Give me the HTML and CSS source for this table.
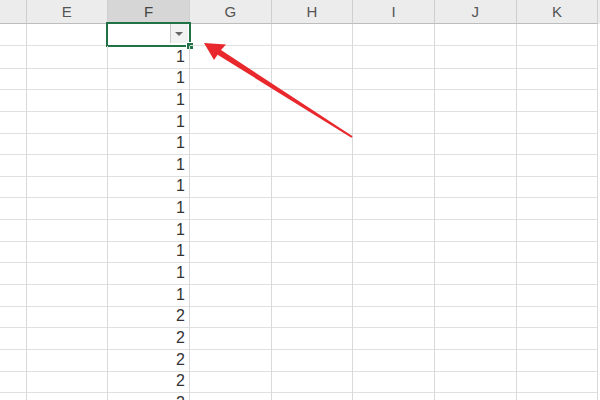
FILE: index.html
```html
<!DOCTYPE html>
<html>
<head>
  <title>Sheet</title>
  <meta name="viewport" content="width=device-width, initial-scale=1.0">
  <link rel="stylesheet" href="styles.css">
</head>
<body>
  <div class="sheet">
    <div class="row head">
      <div class="hcell"></div>
      <div class="hcell">E</div>
      <div class="hcell sel">F</div>
      <div class="hcell">G</div>
      <div class="hcell">H</div>
      <div class="hcell">I</div>
      <div class="hcell">J</div>
      <div class="hcell">K</div>
    </div>
    <div id="rows"></div>
  </div>

  <svg class="arrow" width="600" height="400" viewBox="0 0 600 400">
    <polygon points="204,43 226,44.5 221,50 352.6,136.3 351.4,137.8 217.6,54.8 214,60" fill="#e8282c"/>
  </svg>

  <script>
    // column F values, first row is the active cell with the dropdown
    const values = ['', 1, 1, 1, 1, 1, 1, 1, 1, 1, 1, 1, 1, 2, 2, 2, 2, 2];
    const rows = document.getElementById('rows');

    values.forEach(function (v, i) {
      const row = document.createElement('div');
      row.className = 'row';
      for (let c = 0; c < 8; c++) {
        const cell = document.createElement('div');
        cell.className = 'cell';
        if (c === 2) {
          cell.textContent = v;
          if (i === 0) {
            cell.className = 'cell active';
            cell.innerHTML = '<span class="drop"><span class="tri"></span></span><span class="handle"></span>';
          }
        }
        row.appendChild(cell);
      }
      rows.appendChild(row);
    });
  </script>
</body>
</html>
```

FILE: styles.css
```css
body {
  margin: 0;
  background: #ffffff;
  font-family: "Liberation Sans", Arial, sans-serif;
  overflow: hidden;
  position: relative;
  width: 600px;
  height: 400px;
}

.sheet {
  width: 600px;
}

.row {
  display: grid;
  grid-template-columns: 26.5px repeat(7, 81.7px);
  height: 21.65px;
}

.head {
  height: 24px;
  background: #ececec;
}

.hcell {
  border-right: 1px solid #cfcfcf;
  border-bottom: 1px solid #bdbdbd;
  color: #555;
  font-size: 15px;
  text-align: center;
  line-height: 23px;
}

.hcell.sel {
  background: #d6d6d6;
  color: #444;
}

.cell {
  border-right: 1px solid #d9d9d9;
  border-bottom: 1px solid #e0e0e0;
  color: #333;
  font-size: 16px;
  line-height: 22px;
  text-align: right;
  padding-right: 4px;
  position: relative;
}

.cell.active::before {
  content: "";
  position: absolute;
  left: -2px;
  top: -2px;
  right: -2px;
  bottom: -2px;
  border: 2px solid #217346;
}

.drop {
  position: absolute;
  right: 1px;
  top: 0;
  width: 17px;
  height: 19px;
  background: #f2f2f2;
  border-left: 1px solid #c8c8c8;
  display: flex;
  align-items: center;
  justify-content: center;
}

.tri {
  width: 0;
  height: 0;
  border-left: 4px solid transparent;
  border-right: 4px solid transparent;
  border-top: 4px solid #666;
}

.handle {
  position: absolute;
  right: -5px;
  bottom: -5px;
  width: 6px;
  height: 6px;
  background: #217346;
  border: 1px solid #fff;
}

.arrow {
  position: absolute;
  left: 0;
  top: 0;
}
```
